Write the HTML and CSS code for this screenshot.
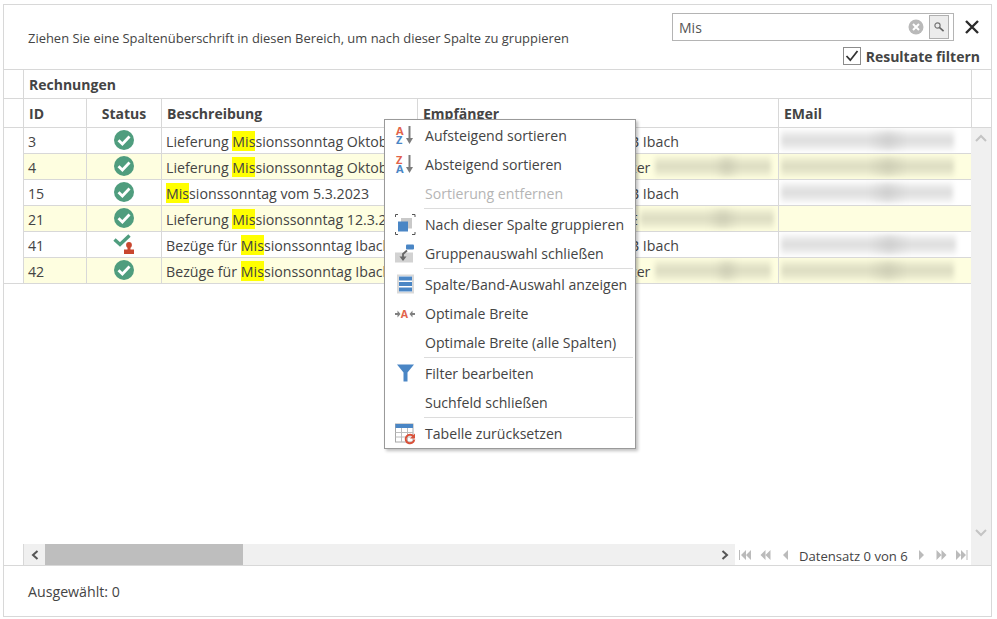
FILE: index.html
```html
<!DOCTYPE html>
<html lang="de">
<head>
<meta charset="utf-8">
<title>Rechnungen</title>
<link rel="stylesheet" href="styles.css">
</head>
<body>
<div class="frame">
  <div class="toolbar">
    <div class="group-hint">Ziehen Sie eine Spaltenüberschrift in diesen Bereich, um nach dieser Spalte zu gruppieren</div>
    <div class="search-panel">
      <div class="search-row">
        <div class="search-box">
          <span class="search-value">Mis</span>
          <svg class="clear-icon" width="16" height="16" viewBox="0 0 16 16"><circle cx="8" cy="8" r="7.5" fill="#b9b9b9"/><path d="M5 5l6 6M11 5l-6 6" stroke="#fff" stroke-width="2"/></svg>
          <span class="search-btn"><svg width="12" height="12" viewBox="0 0 12 12"><circle cx="4.500" cy="4.500" r="2.600" fill="none" stroke="#777" stroke-width="1.200"/><path d="M6.600 6.600l4 3.600" stroke="#666" stroke-width="1.600"/></svg></span>
        </div>
        <svg class="close-icon" width="16" height="16" viewBox="0 0 16 16"><path d="M2 2l12 12M14 2L2 14" stroke="#2b2b2b" stroke-width="2.400"/></svg>
      </div>
      <div class="filter-row">
        <span class="checkbox"><svg width="16" height="16" viewBox="0 0 16 16"><path d="M2.500 8l3.800 4.200L13.500 3" fill="none" stroke="#333" stroke-width="1.800"/></svg></span>
        <span class="filter-label">Resultate filtern</span>
      </div>
    </div>
  </div>

  <div class="band-row">
    <div class="gutter"></div>
    <div class="band">Rechnungen</div>
    <div class="spare"></div>
  </div>
  <div class="head-row">
    <div class="gutter"></div>
    <div class="hcell c-id">ID</div>
    <div class="hcell c-status center">Status</div>
    <div class="hcell c-desc">Beschreibung</div>
    <div class="hcell c-rcpt">Empfänger</div>
    <div class="hcell c-mail">EMail</div>
    <div class="spare"></div>
  </div>

  <div class="body">
    <div class="content">
      <div class="rows-area">
        <div class="rows-wrap">
          <div class="gutter gutter-body"></div>
          <div class="rows">
            <div class="row">
              <div class="cell c-id">3</div>
              <div class="cell c-status center"><svg class="st" width="22" height="22" viewBox="0 0 22 22"><circle cx="11" cy="11" r="10" fill="#4f9d7e"/><path d="M5.500 11.200l3.900 3.800L16.500 7.500" fill="none" stroke="#fff" stroke-width="2.800"/></svg></div>
              <div class="cell c-desc">Lieferung <mark class="hit">Mis</mark>sionssonntag Oktober 2022</div>
              <div class="cell c-rcpt tail">B Ibach</div>
              <div class="cell c-mail"><span class="smudge w-173"></span></div>
            </div>
            <div class="row alt">
              <div class="cell c-id">4</div>
              <div class="cell c-status center"><svg class="st" width="22" height="22" viewBox="0 0 22 22"><circle cx="11" cy="11" r="10" fill="#4f9d7e"/><path d="M5.500 11.200l3.900 3.800L16.500 7.500" fill="none" stroke="#fff" stroke-width="2.800"/></svg></div>
              <div class="cell c-desc">Lieferung <mark class="hit">Mis</mark>sionssonntag Oktober 2022</div>
              <div class="cell c-rcpt tail">zer<span class="smudge w-116 gap"></span></div>
              <div class="cell c-mail"><span class="smudge w-173"></span></div>
            </div>
            <div class="row">
              <div class="cell c-id">15</div>
              <div class="cell c-status center"><svg class="st" width="22" height="22" viewBox="0 0 22 22"><circle cx="11" cy="11" r="10" fill="#4f9d7e"/><path d="M5.500 11.200l3.900 3.800L16.500 7.500" fill="none" stroke="#fff" stroke-width="2.800"/></svg></div>
              <div class="cell c-desc"><mark class="hit">Mis</mark>sionssonntag vom 5.3.2023</div>
              <div class="cell c-rcpt tail">B Ibach</div>
              <div class="cell c-mail"><span class="smudge w-172"></span></div>
            </div>
            <div class="row alt">
              <div class="cell c-id">21</div>
              <div class="cell c-status center"><svg class="st" width="22" height="22" viewBox="0 0 22 22"><circle cx="11" cy="11" r="10" fill="#4f9d7e"/><path d="M5.500 11.200l3.900 3.800L16.500 7.500" fill="none" stroke="#fff" stroke-width="2.800"/></svg></div>
              <div class="cell c-desc">Lieferung <mark class="hit">Mis</mark>sionssonntag 12.3.2023</div>
              <div class="cell c-rcpt tail">E<span class="smudge w-134 gap-small"></span></div>
              <div class="cell c-mail"></div>
            </div>
            <div class="row">
              <div class="cell c-id">41</div>
              <div class="cell c-status center"><svg class="st" width="22" height="22" viewBox="0 0 22 22"><path d="M1.500 6.500l5.500 5L16.500 2.500" fill="none" stroke="#4f9d7e" stroke-width="3.400"/><circle cx="16" cy="12" r="2.900" fill="#c9472f"/><path d="M14.500 13.500h3v3H21V21H11v-4.500h3.500z" fill="#c9472f"/></svg></div>
              <div class="cell c-desc">Bezüge für <mark class="hit">Mis</mark>sionssonntag Ibach</div>
              <div class="cell c-rcpt tail">B Ibach</div>
              <div class="cell c-mail"><span class="smudge w-175"></span></div>
            </div>
            <div class="row alt">
              <div class="cell c-id">42</div>
              <div class="cell c-status center"><svg class="st" width="22" height="22" viewBox="0 0 22 22"><circle cx="11" cy="11" r="10" fill="#4f9d7e"/><path d="M5.500 11.200l3.900 3.800L16.500 7.500" fill="none" stroke="#fff" stroke-width="2.800"/></svg></div>
              <div class="cell c-desc">Bezüge für <mark class="hit">Mis</mark>sionssonntag Ibach</div>
              <div class="cell c-rcpt tail">zer<span class="smudge w-116 gap"></span></div>
              <div class="cell c-mail"><span class="smudge w-173"></span></div>
            </div>
          </div>
        </div>
      </div>
      <div class="hbar">
        <div class="gutter"></div>
        <div class="htrack">
          <span class="hbtn"><svg width="10" height="10" viewBox="0 0 10 10"><path d="M7.500 1L3 5l4.500 4" fill="none" stroke="#555" stroke-width="2"/></svg></span>
          <span class="hthumb"></span>
          <span class="hbtn hbtn-end"><svg width="10" height="10" viewBox="0 0 10 10"><path d="M2.500 1L7 5 2.500 9" fill="none" stroke="#555" stroke-width="2"/></svg></span>
        </div>
        <div class="pager">
          <svg class="pg" width="12" height="10" viewBox="0 0 12 10"><path d="M0.500 0v10" stroke="#bbb"/><path d="M7 0v10L2 5zM12 0v10L7 5z" fill="#bbb"/></svg>
          <svg class="pg" width="11" height="10" viewBox="0 0 11 10"><path d="M5.500 0v10L0.500 5zM10.500 0v10l-5-5z" fill="#bbb"/></svg>
          <svg class="pg pg-prev" width="5" height="10" viewBox="0 0 5 10"><path d="M5 0v10L0 5z" fill="#bbb"/></svg>
          <span class="pager-text">Datensatz 0 von 6</span>
          <svg class="pg pg-next" width="5" height="10" viewBox="0 0 5 10"><path d="M0 0v10l5-5z" fill="#bbb"/></svg>
          <svg class="pg" width="11" height="10" viewBox="0 0 11 10"><path d="M0.500 0v10l5-5zM5.500 0v10l5-5z" fill="#bbb"/></svg>
          <svg class="pg" width="12" height="10" viewBox="0 0 12 10"><path d="M0 0v10l5-5zM5 0v10l5-5z" fill="#bbb"/><path d="M11 0v10" stroke="#bbb"/></svg>
        </div>
      </div>
    </div>
    <div class="vbar">
      <svg width="12" height="8" viewBox="0 0 12 8"><path d="M1 7l5-5 5 5" fill="none" stroke="#c4c4c4" stroke-width="2"/></svg>
      <svg width="12" height="8" viewBox="0 0 12 8"><path d="M1 1l5 5 5-5" fill="none" stroke="#c4c4c4" stroke-width="2"/></svg>
    </div>
  </div>

  <div class="status">Ausgewählt: 0</div>

  <div class="menu">
    <div class="mi"><svg class="mi-ic" width="24" height="24" viewBox="0 0 24 24"><text x="2" y="10.500" class="ic-t ic-red">A</text><text x="2" y="20" class="ic-t ic-blue">Z</text><path d="M15.500 2v13" stroke="#7d7d7d" stroke-width="2"/><path d="M12 14h7l-3.500 6z" fill="#7d7d7d"/></svg><span>Aufsteigend sortieren</span></div>
    <div class="mi"><svg class="mi-ic" width="24" height="24" viewBox="0 0 24 24"><text x="2" y="10.500" class="ic-t ic-red">Z</text><text x="2" y="20" class="ic-t ic-blue">A</text><path d="M15.500 2v13" stroke="#7d7d7d" stroke-width="2"/><path d="M12 14h7l-3.500 6z" fill="#7d7d7d"/></svg><span>Absteigend sortieren</span></div>
    <div class="mi off"><span class="mi-ic"></span><span>Sortierung entfernen</span></div>
    <div class="sep"></div>
    <div class="mi"><svg class="mi-ic" width="24" height="24" viewBox="0 0 24 24"><path d="M1.500 4V1.500H4M18 1.500h3V4M1.500 19v2.500H4M18 21.500h3V19" fill="none" stroke="#555" stroke-width="1"/><rect x="7" y="5" width="11" height="10.500" fill="#c9c9c9"/><rect x="4" y="8.500" width="10" height="10" fill="#4a86c5"/></svg><span>Nach dieser Spalte gruppieren</span></div>
    <div class="mi"><svg class="mi-ic" width="24" height="24" viewBox="0 0 24 24"><rect x="1" y="10.500" width="18" height="10" fill="#d2d2d2"/><rect x="12" y="2.500" width="8" height="5" rx="1" fill="#4a86c5"/><path d="M13 8.500l-4 3.500v6" fill="none" stroke="#666" stroke-width="1.800"/><path d="M5.500 14.500h7L9 19z" fill="#666"/></svg><span>Gruppenauswahl schließen</span></div>
    <div class="sep"></div>
    <div class="mi"><svg class="mi-ic" width="24" height="24" viewBox="0 0 24 24"><rect x="3" y="1.500" width="17" height="19" fill="#d9d9d9"/><rect x="5" y="3" width="13" height="16" fill="#fff"/><path d="M5 3.500h13v4H5zM5 9h13v4H5zM5 14.500h13v4H5z" fill="#4a86c5"/></svg><span>Spalte/Band-Auswahl anzeigen</span></div>
    <div class="mi"><svg class="mi-ic" width="24" height="24" viewBox="0 0 24 24"><path d="M1 11h2.500V8.500L6.500 12l-3 3.500V13H1zM21 11h-2.500V8.500L15.500 12l3 3.500V13H21z" fill="#808080"/><text x="6.700" y="16" class="ic-a">A</text></svg><span>Optimale Breite</span></div>
    <div class="mi"><span class="mi-ic"></span><span>Optimale Breite (alle Spalten)</span></div>
    <div class="sep"></div>
    <div class="mi"><svg class="mi-ic" width="24" height="24" viewBox="0 0 24 24"><path d="M3 2.500h17l-6.500 8v9h-4v-9z" fill="#4a86c5"/></svg><span>Filter bearbeiten</span></div>
    <div class="mi"><span class="mi-ic"></span><span>Suchfeld schließen</span></div>
    <div class="sep"></div>
    <div class="mi"><svg class="mi-ic" width="24" height="24" viewBox="0 0 24 24"><rect x="1.500" y="2" width="17.500" height="18" fill="#fff" stroke="#a8a8a8"/><rect x="1.500" y="2" width="17.500" height="4" fill="#4a86c5"/><path d="M7.500 6v14M13.500 6v14M1.500 10.500h17.500M1.500 15h17.500" stroke="#bdbdbd"/><path d="M19.500 14.500a4.300 4.300 0 1 0 .8 3" fill="none" stroke="#d9513a" stroke-width="2"/><path d="M21 11.500v5h-5z" fill="#d9513a"/></svg><span>Tabelle zurücksetzen</span></div>
  </div>
</div>
</body>
</html>
```

FILE: styles.css
```css
* { box-sizing: border-box; }
html, body { margin: 0; padding: 0; background: #fff; }
body {
  font-family: "Open Sans", "Noto Sans", sans-serif;
  font-size: 13px;
  color: #444;
  padding: 4px 0 0 3px;
}
.frame {
  position: relative;
  width: 989px;
  height: 613px;
  border: 1px solid #d8d8d8;
  display: flex;
  flex-direction: column;
}
.toolbar {
  height: 65px;
  flex: none;
  border-bottom: 1px solid #d8d8d8;
  display: flex;
  justify-content: space-between;
  padding: 8px 11px 0 24px;
}
.group-hint { font-size: 12.950px; margin-top: 17px; line-height: 17px; color: #444; white-space: nowrap; }
.search-panel { display: flex; flex-direction: column; align-items: flex-end; }
.search-row { display: flex; align-items: center; gap: 10px; }
.search-box {
  width: 282px;
  height: 28px;
  border: 1px solid #b4b4b4;
  display: flex;
  align-items: center;
  padding: 0 4px 0 6px;
}
.search-value { flex: 1; font-size: 14px; color: #555; }
.clear-icon { margin-right: 5px; }
.search-btn {
  width: 20px;
  height: 24px;
  background: #ececec;
  border: 1px solid #b0b0b0;
  display: flex;
  align-items: center;
  justify-content: center;
}
.filter-row { display: flex; align-items: center; gap: 5px; margin-top: 5px; }
.checkbox {
  width: 18px;
  height: 18px;
  border: 1px solid #8c8c8c;
  display: flex;
  align-items: center;
  justify-content: center;
}
.filter-label { font-weight: 700; font-size: 14px; color: #444; line-height: 18px; padding-top: 2px; }

.band-row, .head-row { display: flex; flex: none; height: 29px; border-bottom: 1px solid #d8d8d8; }
.gutter { width: 20px; flex: none; border-right: 1px solid #d8d8d8; }
.spare { flex: 1; }
.band { width: 948px; font-weight: 700; font-size: 14px; padding-left: 5px; line-height: 30px; border-right: 1px solid #d8d8d8; }
.hcell { font-weight: 700; font-size: 14px; line-height: 30px; border-right: 1px solid #d8d8d8; padding-left: 5px; }
.c-id { width: 63px; flex: none; }
.c-status { width: 75px; flex: none; }
.c-desc { width: 256px; flex: none; }
.c-rcpt { width: 361px; flex: none; }
.c-mail { width: 193px; flex: none; }
.center { text-align: center; padding-left: 0; }

.body { flex: none; display: flex; height: 438px; border-bottom: 1px solid #d8d8d8; }
.content { width: 967px; flex: none; display: flex; flex-direction: column; }
.rows-area { flex: 1; }
.rows-wrap { display: flex; border-bottom: 1px solid #d8d8d8; }
.rows { width: 947px; }
.row { display: flex; height: 26px; border-bottom: 1px solid #d8d8d8; }
.row:last-child { height: 25px; border-bottom: 0; }
.row.alt { background: #fefee0; }
.cell {
  font-size: 14.200px;
  line-height: 25px;
  padding-left: 4px;
  padding-top: 2px;
  border-right: 1px solid #d8d8d8;
  white-space: nowrap;
  overflow: hidden;
  display: flex;
  align-items: center;
}
.cell.c-mail { width: 192px; border-right: 0; padding-left: 2px; padding-top: 0; }
.cell.center { justify-content: center; padding: 0; }
.cell.c-desc { display: block; padding-top: 0; line-height: 28px; }
.cell.tail { padding-left: 212px; }
.hit { background: #ffff00; color: #444; display: inline-block; line-height: 22px; height: 20px; }
.st { display: block; margin-bottom: 1px; }

.smudge {
  display: block;
  height: 21px;
  flex: none;
  background:
    linear-gradient(to right, transparent 50%, rgba(0,0,0,.07) 62%, transparent 74%),
    linear-gradient(to bottom, rgba(0,0,0,.03), rgba(0,0,0,.14) 50%, rgba(0,0,0,.03));
  filter: blur(2.500px);
}
.tail .smudge { margin-top: -2px; }
.gap { margin-left: 5px; }
.gap-small { margin-left: 2px; }
.w-116 { width: 116px; }
.w-134 { width: 134px; }
.w-172 { width: 172px; }
.w-173 { width: 173px; }
.w-175 { width: 175px; }

.hbar { flex: none; height: 21px; display: flex; }
.htrack {
  width: 711px;
  flex: none;
  background: #f0f0f0;
  display: flex;
  align-items: center;
}
.hbtn { width: 21px; flex: none; display: flex; justify-content: center; }
.hthumb { width: 198px; height: 100%; background: #bebebe; }
.hbtn-end { margin-left: auto; }
.pager { flex: 1; display: flex; align-items: center; padding: 1px 0 0 4px; gap: 9px; }
.pager-text { font-size: 13.100px; margin: 0 2px; line-height: 21px; padding-top: 3px; color: #444; white-space: nowrap; }
.pg { display: block; flex: none; }
.pg-prev { margin-left: 3px; }
.pg-next { margin-right: 3px; }

.vbar {
  flex: 1;
  background: #f0f0f0;
  display: flex;
  flex-direction: column;
  align-items: center;
  justify-content: space-between;
  padding: 6px 0 28px;
}

.status { flex: 1; display: flex; align-items: center; padding-left: 24px; font-size: 14.200px; }

.menu {
  position: absolute;
  left: 380px;
  top: 114px;
  width: 252px;
  background: #fff;
  border: 1px solid #9a9a9a;
  box-shadow: 2px 2px 3px rgba(0,0,0,.25);
  padding: 1px 0 0;
}
.mi { height: 29px; display: flex; align-items: center; padding-left: 9px; gap: 7px; font-size: 14.100px; color: #444; white-space: nowrap; }
.mi-ic { width: 24px; height: 24px; flex: none; display: block; }
.mi.off { color: #b5b5b5; }
.sep { height: 2px; border-top: 1px solid #dcdcdc; margin: 0 2px 0 39px; }
.ic-t { font-family: "Open Sans", sans-serif; font-weight: 700; font-size: 11px; }
.ic-red { fill: #e2634a; }
.ic-blue { fill: #4a86c5; }
.ic-a { font-family: "Open Sans", sans-serif; font-weight: 700; font-size: 10.500px; fill: #e2634a; }
```
